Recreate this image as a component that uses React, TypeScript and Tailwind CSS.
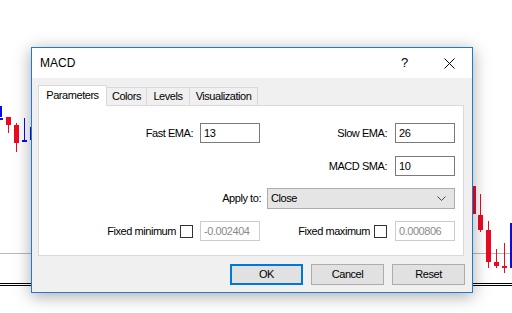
const RED = "#ec0a22";
const BLUE = "#0a0af0";

function ChartBackground() {
  return (
    <svg className="absolute inset-0" width={512} height={313} viewBox="0 0 512 313">
      {/* grid / separator lines */}
      <line x1={0} y1={253.5} x2={512} y2={253.5} stroke="#b8b8b8" strokeWidth={1} />
      <line x1={0} y1={283.5} x2={512} y2={283.5} stroke="#000" strokeWidth={1} />
      <line x1={0} y1={285.5} x2={512} y2={285.5} stroke="#000" strokeWidth={1} />

      {/* left candles */}
      <rect x={0} y={106} width={2} height={11} fill={BLUE} />
      <rect x={0} y={118} width={3} height={2} fill={BLUE} />
      <rect x={8} y={117} width={1} height={16} fill={RED} />
      <rect x={6} y={117} width={5} height={8} fill={RED} />
      <rect x={16} y={123} width={1} height={29} fill={RED} />
      <rect x={14} y={125} width={5} height={18} fill={RED} />
      <rect x={24} y={118} width={1} height={23} fill={BLUE} />
      <rect x={22} y={140} width={5} height={2} fill={BLUE} />
      <rect x={30} y={127} width={1} height={13} fill={BLUE} />

      {/* right candles */}
      <rect x={470} y={186} width={6} height={28} fill={RED} />
      <rect x={480} y={194} width={1} height={38} fill={RED} />
      <rect x={478} y={215} width={5} height={15} fill={RED} />
      <rect x={488} y={221} width={1} height={47} fill={RED} />
      <rect x={486} y={230} width={5} height={32} fill={RED} />
      <rect x={496} y={249} width={1} height={19} fill={RED} />
      <rect x={494} y={262} width={5} height={4} fill={RED} />
      <rect x={504} y={243} width={1} height={30} fill={RED} />
      <rect x={502} y={266} width={5} height={2} fill={RED} />
      <rect x={510} y={223} width={2} height={45} fill={BLUE} />
    </svg>
  );
}

function TextInput({ value, disabled }: { value: string; disabled?: boolean }) {
  return (
    <div
      className={
        disabled
          ? "w-[60px] h-[20px] border border-[#cccccc] bg-white pl-[3px] flex items-center text-[#8a8a8a]"
          : "w-[60px] h-[20px] border border-[#7a7a7a] bg-white pl-[3px] flex items-center text-black"
      }
    >
      {value}
    </div>
  );
}

function Checkbox() {
  return <div className="w-[13px] h-[13px] border border-[#333333] bg-white" />;
}

function Tabs() {
  return (
    <div className="flex items-end h-[20px]">
      <div className="relative z-10 w-[69px] h-[21px] -mb-px bg-white border-l border-r border-t border-[#d9d9d9] flex items-center justify-center pb-[1px]">
        Parameters
      </div>
      <div className="w-[40px] h-[18px] border-t border-r border-[#d9d9d9] flex items-center justify-center">
        Colors
      </div>
      <div className="w-[43px] h-[18px] border-t border-r border-[#d9d9d9] flex items-center justify-center">
        Levels
      </div>
      <div className="w-[68px] h-[18px] border-t border-r border-[#d9d9d9] flex items-center justify-center">
        Visualization
      </div>
    </div>
  );
}

function ParametersPanel() {
  return (
    <div className="w-[426px] h-[151px] border border-[#d9d9d9] bg-white pt-[17px]">
      <div className="flex items-center h-[20px]">
        <span className="w-[154px] text-right">Fast EMA:</span>
        <div className="ml-[7px]">
          <TextInput value="13" />
        </div>
        <span className="w-[127px] text-right">Slow EMA:</span>
        <div className="ml-[8px]">
          <TextInput value="26" />
        </div>
      </div>

      <div className="flex items-center h-[20px] mt-[13px]">
        <span className="w-[221px]" />
        <span className="w-[127px] text-right">MACD SMA:</span>
        <div className="ml-[8px]">
          <TextInput value="10" />
        </div>
      </div>

      <div className="flex items-center h-[20px] mt-[12px]">
        <span className="w-[222px] text-right">Apply to:</span>
        <div className="ml-[6px] w-[188px] h-[21px] border border-[#acacac] bg-[#e5e5e5] flex items-center pl-[3px] pr-[8px]">
          <span className="flex-1">Close</span>
          <svg width={9} height={5} viewBox="0 0 9 5">
            <path d="M0.5 0.5 L4.5 4.5 L8.5 0.5" fill="none" stroke="#4a4a4a" strokeWidth={1} />
          </svg>
        </div>
      </div>

      <div className="flex items-center h-[20px] mt-[13px]">
        <span className="w-[137px] text-right">Fixed minimum</span>
        <div className="ml-[4px]">
          <Checkbox />
        </div>
        <div className="ml-[7px]">
          <TextInput value="-0.002404" disabled />
        </div>
        <span className="w-[110px] text-right">Fixed maximum</span>
        <div className="ml-[4px]">
          <Checkbox />
        </div>
        <div className="ml-[8px]">
          <TextInput value="0.000806" disabled />
        </div>
      </div>
    </div>
  );
}

export default function App() {
  return (
    <div className="relative w-[512px] h-[313px] overflow-hidden bg-white font-['Liberation_Sans',Arial,sans-serif] text-[11px] tracking-[-0.45px] text-black">
      <ChartBackground />

      {/* MACD dialog window */}
      <div className="absolute left-[31px] top-[47px] w-[442px] h-[246px] border border-[#1b7bd0] bg-[#f0f0f0] shadow-[0_3px_16px_rgba(0,0,0,0.35)] flex flex-col">
        <div className="h-[30px] bg-white flex items-center">
          <span className="pl-[8px] text-[12px] tracking-normal">MACD</span>
          <div className="ml-auto flex h-full">
            <div className="w-[45px] flex items-center justify-center text-[13px] tracking-normal">?</div>
            <div className="w-[45px] flex items-center justify-center">
              <svg width={11} height={11} viewBox="0 0 11 11">
                <path d="M0.5 0.5 L10.5 10.5 M10.5 0.5 L0.5 10.5" stroke="#000" strokeWidth={1} />
              </svg>
            </div>
          </div>
        </div>

        <div className="pt-[7px] pl-[6px]">
          <Tabs />
          <ParametersPanel />
          <div className="flex justify-end gap-[8px] mt-[8px] pr-[7px]">
            <button className="w-[73px] h-[21px] border-2 border-[#0078d7] bg-[#e1e1e1]">OK</button>
            <button className="w-[73px] h-[21px] border border-[#adadad] bg-[#e1e1e1]">Cancel</button>
            <button className="w-[73px] h-[21px] border border-[#adadad] bg-[#e1e1e1]">Reset</button>
          </div>
        </div>
      </div>
    </div>
  );
}
